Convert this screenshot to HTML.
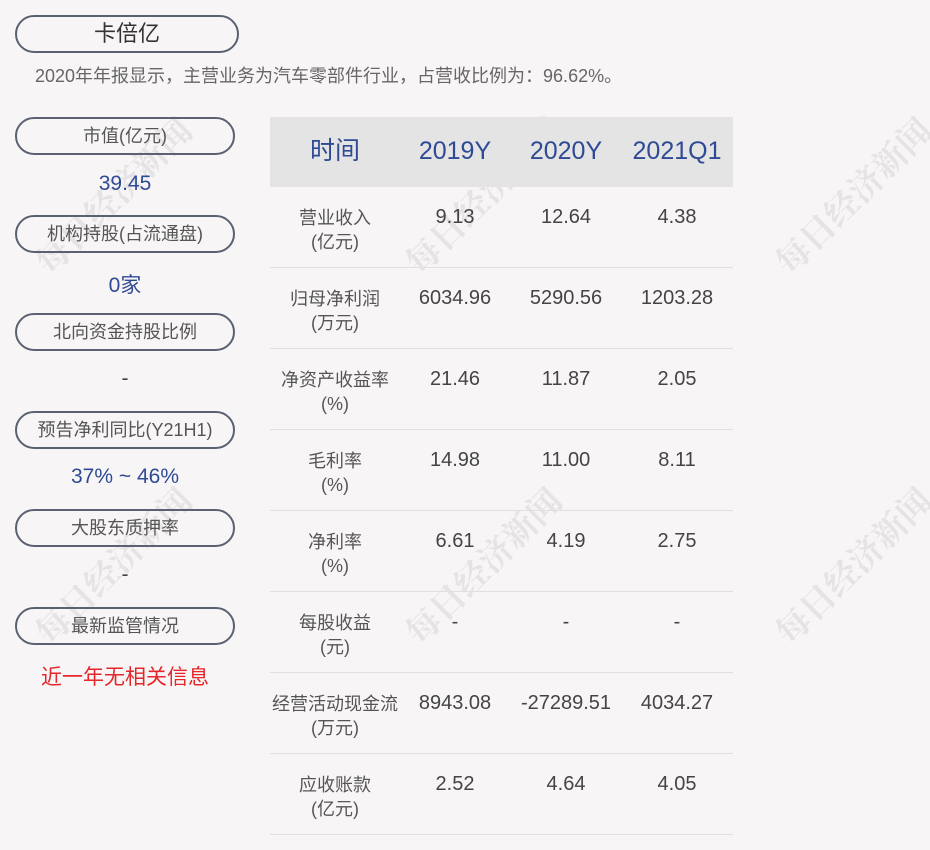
<!DOCTYPE html>
<html style="width:930px;height:850px;overflow:hidden"><head><meta charset="utf-8"><style>
html,body{margin:0;width:930px;height:850px;overflow:hidden}
body{background:#f8f5f6;position:relative;font-family:"Liberation Sans","Noto Sans CJK SC",sans-serif;}
.a{position:absolute}
.pill{position:absolute;left:15px;width:216px;height:34px;border:2px solid #5a6272;border-radius:19px;text-align:center;line-height:34px;font-size:18px;color:#555}
.val{position:absolute;left:15px;width:220px;text-align:center;font-size:21px;color:#2f4a95}
.wm{position:absolute;font-size:34px;font-weight:bold;color:rgba(0,0,0,0.07);transform:rotate(-45deg);white-space:nowrap;font-family:"Noto Serif CJK SC",serif}
.hd{position:absolute;top:117px;left:270px;width:463px;height:70px;background:#e4e4e4}
.h{position:absolute;top:136px;font-size:25px;color:#2f4a95;text-align:center;width:110px;line-height:30px}
.row{position:absolute;left:270px;width:463px;height:80px;border-bottom:1px solid #e2dfe0}
.lb{position:absolute;left:0;width:130px;text-align:center;font-size:18px;color:#555;line-height:24px;top:19px}
.v{position:absolute;top:18px;width:110px;text-align:center;font-size:20px;color:#444;line-height:24px}
</style></head><body>
<div class="wm" style="left:10px;top:170px">每日经济新闻</div>
<div class="wm" style="left:380px;top:170px">每日经济新闻</div>
<div class="wm" style="left:750px;top:170px">每日经济新闻</div>
<div class="wm" style="left:10px;top:540px">每日经济新闻</div>
<div class="wm" style="left:380px;top:540px">每日经济新闻</div>
<div class="wm" style="left:750px;top:540px">每日经济新闻</div>

<div class="pill" style="top:15px;width:220px;font-size:22px;color:#333">卡倍亿</div>
<div class="a" style="left:35px;top:62px;font-size:18px;color:#666">2020年年报显示，主营业务为汽车零部件行业，占营收比例为：96.62%。</div>

<div class="pill" style="top:117px">市值(亿元)</div>
<div class="val" style="top:172px">39.45</div>
<div class="pill" style="top:215px">机构持股(占流通盘)</div>
<div class="val" style="top:269px">0家</div>
<div class="pill" style="top:313px">北向资金持股比例</div>
<div class="val" style="top:367px;color:#444">-</div>
<div class="pill" style="top:411px">预告净利同比(Y21H1)</div>
<div class="val" style="top:465px">37% ~ 46%</div>
<div class="pill" style="top:509px">大股东质押率</div>
<div class="val" style="top:563px;color:#444">-</div>
<div class="pill" style="top:607px">最新监管情况</div>
<div class="val" style="top:661px;color:#e5262b">近一年无相关信息</div>

<div class="hd"></div>
<div class="h" style="left:280px">时间</div>
<div class="h" style="left:400px">2019Y</div>
<div class="h" style="left:511px">2020Y</div>
<div class="h" style="left:622px">2021Q1</div>

<div class="row" style="top:187px"><div class="lb">营业收入<br>(亿元)</div><div class="v" style="left:130px">9.13</div><div class="v" style="left:241px">12.64</div><div class="v" style="left:352px">4.38</div></div>
<div class="row" style="top:268px"><div class="lb">归母净利润<br>(万元)</div><div class="v" style="left:130px">6034.96</div><div class="v" style="left:241px">5290.56</div><div class="v" style="left:352px">1203.28</div></div>
<div class="row" style="top:349px"><div class="lb">净资产收益率<br>(%)</div><div class="v" style="left:130px">21.46</div><div class="v" style="left:241px">11.87</div><div class="v" style="left:352px">2.05</div></div>
<div class="row" style="top:430px"><div class="lb">毛利率<br>(%)</div><div class="v" style="left:130px">14.98</div><div class="v" style="left:241px">11.00</div><div class="v" style="left:352px">8.11</div></div>
<div class="row" style="top:511px"><div class="lb">净利率<br>(%)</div><div class="v" style="left:130px">6.61</div><div class="v" style="left:241px">4.19</div><div class="v" style="left:352px">2.75</div></div>
<div class="row" style="top:592px"><div class="lb">每股收益<br>(元)</div><div class="v" style="left:130px">-</div><div class="v" style="left:241px">-</div><div class="v" style="left:352px">-</div></div>
<div class="row" style="top:673px"><div class="lb">经营活动现金流<br>(万元)</div><div class="v" style="left:130px">8943.08</div><div class="v" style="left:241px">-27289.51</div><div class="v" style="left:352px">4034.27</div></div>
<div class="row" style="top:754px"><div class="lb">应收账款<br>(亿元)</div><div class="v" style="left:130px">2.52</div><div class="v" style="left:241px">4.64</div><div class="v" style="left:352px">4.05</div></div>
</body></html>
